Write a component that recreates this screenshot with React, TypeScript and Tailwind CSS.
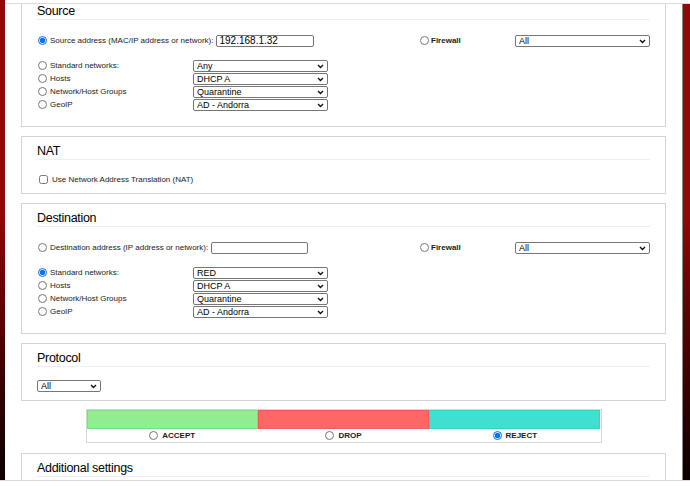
import React from "react";

function Radio({ name, checked }: { name: string; checked?: boolean }) {
  return (
    <input
      type="radio"
      name={name}
      defaultChecked={checked}
      className="m-0 ml-px h-[9px] w-[9px] shrink-0"
    />
  );
}

function Select({ value, className }: { value: string; className: string }) {
  return (
    <div className={`relative h-[12px] shrink-0 ${className}`}>
      <select className="block h-[12px] w-full appearance-none rounded-[2px] border border-[#767676] bg-white py-0 pl-[3px] text-[9px] leading-[10px] text-black outline-none">
        <option>{value}</option>
      </select>
      <svg
        className="pointer-events-none absolute right-[4px] top-[4px]"
        width="7"
        height="5"
        viewBox="0 0 7 5"
      >
        <path d="M1 1l2.5 2.5L6 1" stroke="#111" strokeWidth="1.4" fill="none" />
      </svg>
    </div>
  );
}

function Box({
  title,
  className,
  children,
}: {
  title: string;
  className?: string;
  children?: React.ReactNode;
}) {
  return (
    <div className={`border border-[#d4d4d4] bg-white px-[15px] pt-[8px] ${className ?? ""}`}>
      <h2 className="border-b border-[#eeeeee] pb-px text-[12.5px] leading-[13px] tracking-[-0.3px] text-black">
        {title}
      </h2>
      {children}
    </div>
  );
}

function Networks({ group, first, checked }: { group: string; first: string; checked?: boolean }) {
  const rows = [
    ["Standard networks:", first],
    ["Hosts", "DHCP A"],
    ["Network/Host Groups", "Quarantine"],
    ["GeoIP", "AD - Andorra"],
  ];
  return (
    <div className="mt-[12px] flex flex-col">
      {rows.map(([label, value], i) => (
        <div key={label} className="flex h-[13px] items-center">
          <div className="flex w-[156px] items-center">
            <Radio name={group} checked={checked && i === 0} />
            <span className="ml-[3px] text-[8px] text-[#222]">{label}</span>
          </div>
          <Select value={value} className="w-[135px]" />
        </div>
      ))}
    </div>
  );
}

function AddressRow({
  group,
  label,
  value,
  inputWidth,
  checked,
}: {
  group: string;
  label: string;
  value: string;
  inputWidth: string;
  checked?: boolean;
}) {
  return (
    <div className="mt-[14px] flex h-[13px] items-center">
      <div className="flex w-[382px] items-center">
        <Radio name={group} checked={checked} />
        <span className="ml-[3px] text-[8px] text-[#222]">{label}</span>
        <input
          type="text"
          defaultValue={value}
          className={`ml-[3px] block h-[12px] ${inputWidth} rounded-[2px] border border-[#767676] px-[2px] text-[10px] leading-none text-black outline-none`}
        />
      </div>
      <div className="flex w-[96px] items-center">
        <Radio name={group} />
        <span className="ml-[2px] text-[8px] font-bold text-[#222]">Firewall</span>
      </div>
      <Select value="All" className="w-[135px]" />
    </div>
  );
}

const actions = [
  { label: "ACCEPT", color: "bg-[#90ee90] border-[#80dc80]" },
  { label: "DROP", color: "bg-[#ff6666] border-[#f05a5a]" },
  { label: "REJECT", color: "bg-[#40e0d0] border-[#3cd2c3]", checked: true },
];

export default function App() {
  return (
    <div className="relative h-[487px] w-[690px] overflow-hidden bg-white font-['Liberation_Sans',Arial,sans-serif]">
      <div className="flex h-[481px] border-b border-[#dadada]">
        <div className="w-[5px] bg-gradient-to-b from-[#910808] from-45% to-[#0c0000]" />
        <div className="flex flex-1 flex-col pt-[3px]">
          <div className="flex min-h-0 flex-1 border-t border-[#dcdcdc]">
            <main className="min-w-0 flex-1 overflow-hidden px-[16px]">
              <div className="-mt-[8px] flex flex-col">
                <Box title="Source" className="pb-[15px]">
                  <AddressRow
                    group="src"
                    label="Source address (MAC/IP address or network):"
                    value="192.168.1.32"
                    inputWidth="w-[98px]"
                    checked
                  />
                  <Networks group="src" first="Any" />
                </Box>

                <Box title="NAT" className="mt-[9px] pb-[7px]">
                  <label className="mt-[13px] flex h-[13px] items-center">
                    <input type="checkbox" className="m-0 ml-[2px] h-[9px] w-[9px]" />
                    <span className="ml-[4px] text-[8px] text-[#222]">
                      Use Network Address Translation (NAT)
                    </span>
                  </label>
                </Box>

                <Box title="Destination" className="mt-[9px] pb-[15px]">
                  <AddressRow
                    group="dst"
                    label="Destination address (IP address or network):"
                    value=""
                    inputWidth="w-[97px]"
                  />
                  <Networks group="dst" first="RED" checked />
                </Box>

                <Box title="Protocol" className="mt-[9px] pb-[8px]">
                  <Select value="All" className="mt-[13px] w-[64px]" />
                </Box>

                <div className="mx-auto mt-[8px] w-[516px] border border-[#d6d6d6]">
                  <div className="grid grid-cols-3">
                    {actions.map((a) => (
                      <div key={a.label} className={`h-[19px] border ${a.color}`} />
                    ))}
                  </div>
                  <div className="grid h-[13px] grid-cols-3">
                    {actions.map((a) => (
                      <label key={a.label} className="flex items-center justify-center gap-[4px]">
                        <input
                          type="radio"
                          name="action"
                          defaultChecked={a.checked}
                          className="m-0 h-[9px] w-[9px]"
                        />
                        <span className="text-[8px] font-bold text-[#222]">{a.label}</span>
                      </label>
                    ))}
                  </div>
                </div>

                <Box title="Additional settings" className="mt-[10px] h-[60px]" />
              </div>
            </main>
            <div className="w-[8px] border-l border-[#8a8a8a] bg-gradient-to-b from-[#910808] from-45% to-[#0c0000]" />
          </div>
        </div>
      </div>
    </div>
  );
}
